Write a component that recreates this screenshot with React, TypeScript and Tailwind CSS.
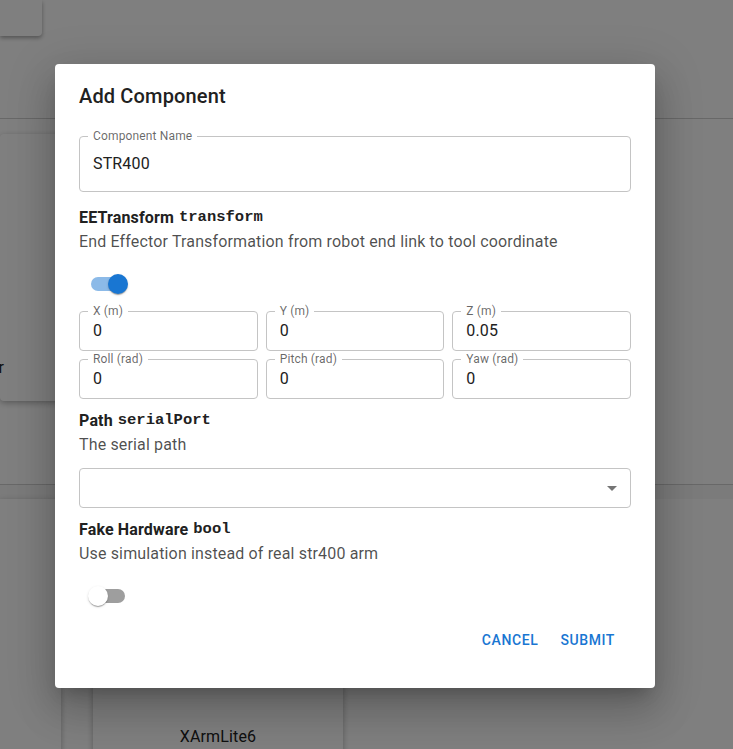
import React from 'react';

const Field = ({
  label,
  value,
  tall,
}: {
  label: string;
  value: string;
  tall?: boolean;
}) => (
  <div className="relative">
    <div
      className={
        tall
          ? 'h-[56px] rounded-[4px] border border-[#c4c4c4] flex items-center px-[13px] text-[16px] tracking-[0.15px] text-[#212121]'
          : 'h-[40px] rounded-[4px] border border-[#c4c4c4] flex items-center px-[13px] text-[16px] tracking-[0.15px] text-[#212121]'
      }
    >
      {value}
    </div>
    <span className="absolute left-[9px] top-[-8px] bg-white px-[5px] text-[12px] leading-[16px] tracking-[0.15px] text-black/60">
      {label}
    </span>
  </div>
);

const Switch = ({ on }: { on?: boolean }) => (
  <div className="relative w-[58px] h-[38px]">
    <div
      className={
        on
          ? 'absolute left-[12px] top-[12px] w-[34px] h-[14px] rounded-full bg-[#8cbae8]'
          : 'absolute left-[12px] top-[12px] w-[34px] h-[14px] rounded-full bg-[#9e9e9e]'
      }
    />
    <div
      className={
        on
          ? 'absolute left-[29px] top-[9px] w-[20px] h-[20px] rounded-full bg-[#1976d2] shadow-[0_2px_1px_-1px_rgba(0,0,0,0.2),0_1px_1px_0_rgba(0,0,0,0.14),0_1px_3px_0_rgba(0,0,0,0.12)]'
          : 'absolute left-[9px] top-[9px] w-[20px] h-[20px] rounded-full bg-white shadow-[0_2px_1px_-1px_rgba(0,0,0,0.2),0_1px_1px_0_rgba(0,0,0,0.14),0_1px_3px_0_rgba(0,0,0,0.12)]'
      }
    />
  </div>
);

const Heading = ({ title, type }: { title: string; type: string }) => (
  <div className="h-[24px] flex items-center gap-[5px]">
    <span className="text-[16px] font-bold tracking-[0.15px] text-[#212121]">{title}</span>
    <span className="text-[15.5px] font-bold text-[#212121] font-['Liberation_Mono',monospace]">
      {type}
    </span>
  </div>
);

export default function App() {
  return (
    <div className="relative w-[733px] h-[749px] overflow-hidden bg-white font-['Roboto',sans-serif]">

      {/* BACKGROUND PAGE */}
      <div className="flex flex-col">
        <div className="w-[42px] h-[36px] rounded-br-[4px] bg-white shadow-[0_2px_4px_rgba(0,0,0,0.35)]" />
        <div className="h-[82px]" />
        <div className="border-t border-[#d0d0d0] h-[16px]" />
        <div className="flex">
          <div className="w-[300px] h-[267px] rounded-[4px] bg-white shadow-[0_2px_6px_rgba(0,0,0,0.3)] flex items-end pb-[21px]">
            <div className="w-[4px] flex justify-end whitespace-nowrap text-[16px] text-[#222]">
              Manipulator
            </div>
          </div>
        </div>
        <div className="h-[83px]" />
        <div className="border-t border-[#d0d0d0] h-[15px] bg-[#f6f6f6]" />
        <div className="flex gap-[32px]">
          <div className="w-[61px] h-[260px] bg-white shadow-[0_2px_6px_rgba(0,0,0,0.3)]" />
          <div className="w-[250px] h-[260px] rounded-[4px] bg-white shadow-[0_2px_6px_rgba(0,0,0,0.3)] flex flex-col items-center pt-[226px]">
            <span className="text-[16px] tracking-[0.15px] text-[#222]">XArmLite6</span>
          </div>
        </div>
      </div>

      {/* BACKDROP */}
      <div className="absolute inset-0 bg-black/50" />

      {/* DIALOG */}
      <div className="absolute left-[55px] top-[64px] w-[600px] h-[624px] bg-white rounded-[4px] shadow-[0_11px_15px_-7px_rgba(0,0,0,0.2),0_24px_38px_3px_rgba(0,0,0,0.14),0_9px_46px_8px_rgba(0,0,0,0.12)] flex flex-col">

        <div className="px-6 pt-4 h-[48px] flex items-center">
          <h2 className="text-[20px] font-medium text-[#212121] tracking-[0.15px] leading-[32px]">
            Add Component
          </h2>
        </div>

        <div className="px-6 flex flex-col">

          {/* NAME */}
          <div className="mt-[24px]">
            <Field label="Component Name" value="STR400" tall />
          </div>

          {/* TRANSFORM */}
          <div className="mt-[14px]">
            <Heading title="EETransform" type="transform" />
            <p className="h-[24px] leading-[24px] text-[16px] tracking-[0.15px] text-black/70">
              End Effector Transformation from robot end link to tool coordinate
            </p>
          </div>

          <div className="mt-[11px]">
            <Switch on />
          </div>

          <div className="mt-[8px] grid grid-cols-3 gap-[8px]">
            <Field label="X (m)" value="0" />
            <Field label="Y (m)" value="0" />
            <Field label="Z (m)" value="0.05" />
            <Field label="Roll (rad)" value="0" />
            <Field label="Pitch (rad)" value="0" />
            <Field label="Yaw (rad)" value="0" />
          </div>

          {/* PATH */}
          <div className="mt-[10px]">
            <Heading title="Path" type="serialPort" />
            <p className="h-[24px] leading-[24px] text-[16px] tracking-[0.15px] text-black/70">
              The serial path
            </p>
          </div>

          <div className="mt-[11px] h-[40px] rounded-[4px] border border-[#c4c4c4] flex items-center justify-end pr-[6px]">
            <svg width="24" height="24" viewBox="0 0 24 24">
              <path d="M7 10l5 5 5-5z" fill="rgba(0,0,0,0.54)" />
            </svg>
          </div>

          {/* FAKE HARDWARE */}
          <div className="mt-[10px]">
            <Heading title="Fake Hardware" type="bool" />
            <p className="h-[24px] leading-[24px] text-[16px] tracking-[0.15px] text-black/70">
              Use simulation instead of real str400 arm
            </p>
          </div>

          <div className="mt-[11px]">
            <Switch />
          </div>
        </div>

        {/* ACTIONS */}
        <div className="mt-[7px] flex justify-end gap-[6px] pr-[32px]">
          <button className="h-[36px] px-2 text-[14px] font-medium uppercase tracking-[0.6px] text-[#1976d2]">
            Cancel
          </button>
          <button className="h-[36px] px-2 text-[14px] font-medium uppercase tracking-[0.6px] text-[#1976d2]">
            Submit
          </button>
        </div>
      </div>
    </div>
  );
}
